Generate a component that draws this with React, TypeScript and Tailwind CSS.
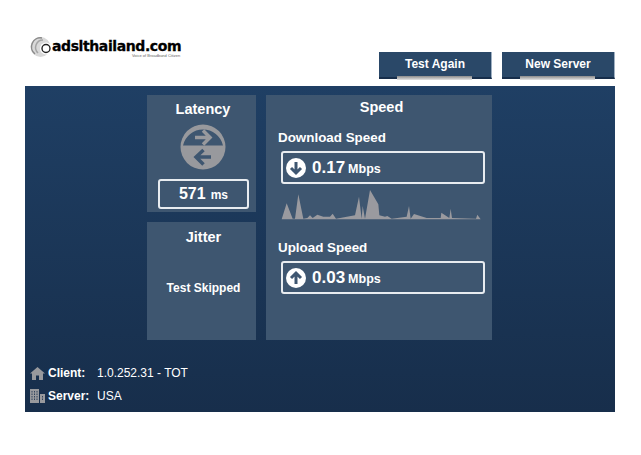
const sans = "font-['Liberation_Sans',Arial,sans-serif]";

const chartPoints =
  "35,280 50,232 68,278 75,278 85,205 100,278 112,276 120,268 128,276 142,266 160,272 180,272 188,263 198,278 255,268 267,212 275,278 278,240 285,278 300,192 325,235 328,268 345,272 352,270 365,278 410,272 417,240 422,278 432,264 470,276 512,276 514,260 538,276 542,248 546,276 618,278 622,266 632,280";

const Logo = () => (
  <div className="flex items-center">
    <svg width="22" height="22" viewBox="0 0 22 22" className="shrink-0">
      <circle cx="10.5" cy="11" r="10" fill="#d9d9d9" />
      <path d="M12 2A9 9 0 0 0 5 18" fill="none" stroke="#8a8a8a" strokeWidth="1.5" />
      <path d="M13 4A7.5 7.5 0 0 0 8 17" fill="none" stroke="#a5a5a5" strokeWidth="1.5" />
      <circle cx="16" cy="12.5" r="6" fill="#ffffff" />
      <circle cx="16" cy="12.5" r="4" fill="none" stroke="#222222" strokeWidth="1.4" />
    </svg>
    <div className="flex flex-col pt-[3px]">
      <span className="font-['DejaVu_Sans',sans-serif] text-[14px] leading-[13px] font-bold tracking-[-0.4px] text-black [-webkit-text-stroke:0.3px_black]">adslthailand.com</span>
      <span className="self-end pr-[1px] text-[4px] leading-[5px] text-[#666666]">Voice of Broadband Citizen</span>
    </div>
  </div>
);

const TopButton = ({ label }: { label: string }) => (
  <button className="relative h-[27px] w-[113px] border-r border-b-2 border-r-[#9fb0c2] border-b-[#172e4b] bg-[#2a4868] pb-[1px] text-[12px] font-bold text-white">
    {label}
    <span className="absolute bottom-[-3px] left-[18px] h-[4px] w-[75px] bg-gradient-to-b from-[#8b8b8b] to-[#e4e4e4]" />
  </button>
);

const ArrowCircle = ({ up }: { up?: boolean }) => (
  <svg width="20" height="20" viewBox="0 0 20 20" className="shrink-0">
    <circle cx="10" cy="10" r="10" fill="#ffffff" />
    <path
      d={up ? "M10 16V5M5 10l5-5 5 5" : "M10 4v11M5 10l5 5 5-5"}
      fill="none"
      stroke="#3e5670"
      strokeWidth="3"
    />
  </svg>
);

const SpeedBox = ({ value, up }: { value: string; up?: boolean }) => (
  <div className="ml-[3px] flex h-[33px] w-[204px] items-center rounded-[3px] border-2 border-[#e8ecf0] pl-[3px] text-white">
    <ArrowCircle up={up} />
    <span className="ml-[6px] text-[17px] font-bold">{value}</span>
    <span className="mt-[3px] ml-[3px] text-[12.5px] font-bold">Mbps</span>
  </div>
);

const App = () => {
  return (
    <div className={`h-[455px] w-[641px] overflow-hidden bg-white ${sans}`}>
      <div className="flex h-[86px] items-start justify-between pr-[26px] pl-[30px]">
        <div className="pt-[36px]">
          <Logo />
        </div>
        <div className="flex gap-[10px] pt-[52px]">
          <TopButton label="Test Again" />
          <TopButton label="New Server" />
        </div>
      </div>

      <div className="mx-[25px] flex h-[326px] w-[590px] flex-col bg-gradient-to-b from-[#1f3f64] to-[#172e4b]">
        <div className="flex justify-center gap-[10px] pt-[9px] pr-[1px]">
          <div className="flex w-[109px] flex-col gap-[10px]">
            <div className="flex h-[117px] flex-col items-center bg-[#3e5670] pt-[5px] pl-[3px] text-white">
              <h2 className="text-[14.5px] leading-[18px] font-bold">Latency</h2>
              <svg width="46" height="46" viewBox="0 0 46 46" className="mt-[6px]">
                <circle cx="23" cy="23" r="22.5" fill="#98999d" />
                <path d="M3 21.5A20.5 20.5 0 0 1 43 21.5Z" fill="#3e5670" />
                <path d="M15 13.5h15M23 6.5l7 7-7 7" fill="none" stroke="#98999d" strokeWidth="3.5" />
                <path d="M31 33H16M23.5 26l-7.5 7 7.5 7.5" fill="none" stroke="#3e5670" strokeWidth="3.5" />
              </svg>
              <div className="mt-[9px] ml-[1px] flex h-[30px] w-[91px] items-center justify-center gap-[5px] rounded-[3px] border-2 border-[#e8ecf0]">
                <span className="text-[16px] font-bold">571</span>
                <span className="mt-[2px] text-[12px] font-bold">ms</span>
              </div>
            </div>
            <div className="flex h-[118px] flex-col items-center bg-[#3e5670] pt-[6px] pl-[4px] text-white">
              <h2 className="text-[14.5px] leading-[18px] font-bold">Jitter</h2>
              <p className="mt-[33px] text-[12px] font-bold">Test Skipped</p>
            </div>
          </div>

          <div className="h-[245px] w-[226px] bg-[#3e5670] pt-[3px] pr-[7px] pl-[12px] text-white">
            <h2 className="text-center text-[14.5px] leading-[18px] font-bold">Speed</h2>
            <h3 className="mt-[14px] text-[13.4px] leading-[16px] font-bold">Download Speed</h3>
            <div className="mt-[5px]">
              <SpeedBox value="0.17" />
            </div>
            <svg width="204" height="35" viewBox="30 186 612 105" className="mt-[4px] ml-[2px] block">
              <polygon points={chartPoints} fill="#9a9a9f" />
            </svg>
            <h3 className="mt-[17px] text-[13.4px] leading-[16px] font-bold">Upload Speed</h3>
            <div className="mt-[5px]">
              <SpeedBox value="0.03" up />
            </div>
          </div>
        </div>

        <div className="mt-[25px] flex flex-col gap-[7px] pl-[5px] text-[12px] leading-[16px] text-white">
          <div className="flex items-center">
            <svg width="15" height="14" viewBox="0 0 15 14" className="shrink-0">
              <path d="M7.5 1L0 7.5h2V14h4V9.5h3V14h4V7.5h2Z" fill="#98999d" />
            </svg>
            <span className="ml-[3px] w-[49px] font-bold">Client:</span>
            <span>1.0.252.31 - TOT</span>
          </div>
          <div className="flex items-center">
            <svg width="15" height="14" viewBox="0 0 15 14" className="shrink-0">
              <path d="M0 0h9v14H0ZM10 5h5v9h-5Z" fill="#98999d" />
              <path d="M2 2v10M4.5 2v10M7 2v10M12.5 7v5" stroke="#172e4b" strokeWidth="0.8" strokeDasharray="1.5 1" />
            </svg>
            <span className="ml-[3px] w-[49px] font-bold">Server:</span>
            <span>USA</span>
          </div>
        </div>
      </div>
    </div>
  );
};

export default App;
